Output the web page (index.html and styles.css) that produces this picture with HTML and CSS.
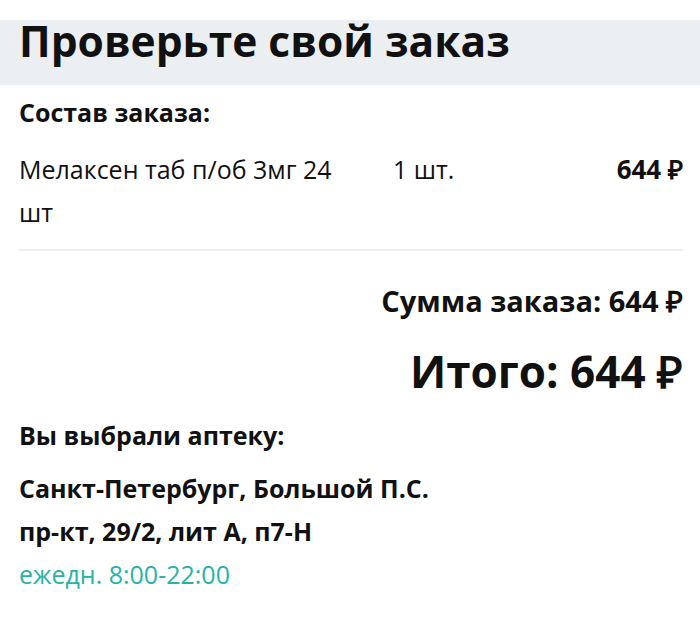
FILE: index.html
```html
<!DOCTYPE html>
<html lang="ru">
<head>
    <meta charset="UTF-8" />
    <title>Проверьте свой заказ</title>
    <link rel="stylesheet" href="styles.css">
</head>
<body>

    <!-- Заголовок -->
    <div class="page-head">
        <h1>Проверьте свой заказ</h1>
    </div>

    <div class="content">
        <h3 class="section-title">Состав заказа:</h3>

        <!-- Товары -->
        <div class="order-item">
            <div class="item-name">Мелаксен таб п/об 3мг 24 шт</div>
            <div class="item-qty">1 шт.</div>
            <div class="item-price">644 ₽</div>
        </div>

        <div class="order-sum">Сумма заказа: 644 ₽</div>
        <div class="order-total">Итого: 644 ₽</div>

        <!-- Аптека -->
        <h3 class="section-title pharmacy-title">Вы выбрали аптеку:</h3>
        <div class="pharmacy-address">Санкт-Петербург, Большой П.С. пр-кт, 29/2, лит А, п7-Н</div>
        <div class="pharmacy-hours">ежедн. 8:00-22:00</div>
    </div>

</body>
</html>
```

FILE: styles.css
```css
* {
    box-sizing: border-box;
}

body {
    font-family: 'Open Sans', 'Liberation Sans', sans-serif;
    background: #fff;
    margin: 0;
    padding: 20px 0 0 0;
    color: #111;
}

.page-head {
    background: #eceff2;
    height: 65px;
    padding: 0 19px;
}

h1 {
    margin: 0;
    font-size: 42.5px;
    font-weight: 700;
    line-height: 41px;
}

.content {
    padding: 0 17px 0 19px;
}

.section-title {
    margin: 0;
    font-size: 25px;
    font-weight: 700;
    line-height: 30px;
}

.content > .section-title:first-child {
    padding-top: 12px;
}

/* Linha do produto */
.order-item {
    display: grid;
    grid-template-columns: 335px 1fr auto;
    column-gap: 39px;
    font-size: 25px;
    line-height: 43px;
    padding: 21px 0 15px 0;
    border-bottom: 2px solid #efefef;
}

.item-price {
    font-weight: 700;
    font-size: 26px;
}

.order-sum {
    text-align: right;
    font-size: 29px;
    font-weight: 700;
    margin-top: 30px;
    line-height: 40px;
}

.order-total {
    text-align: right;
    font-size: 44px;
    font-weight: 700;
    margin-top: 22px;
    line-height: 56px;
}

.pharmacy-title {
    margin-top: 21px;
}

.pharmacy-address {
    font-size: 25px;
    font-weight: 700;
    line-height: 43px;
    margin-top: 17px;
    max-width: 425px;
}

.pharmacy-hours {
    font-size: 25px;
    line-height: 43px;
    color: #27b3a4;
}
```
